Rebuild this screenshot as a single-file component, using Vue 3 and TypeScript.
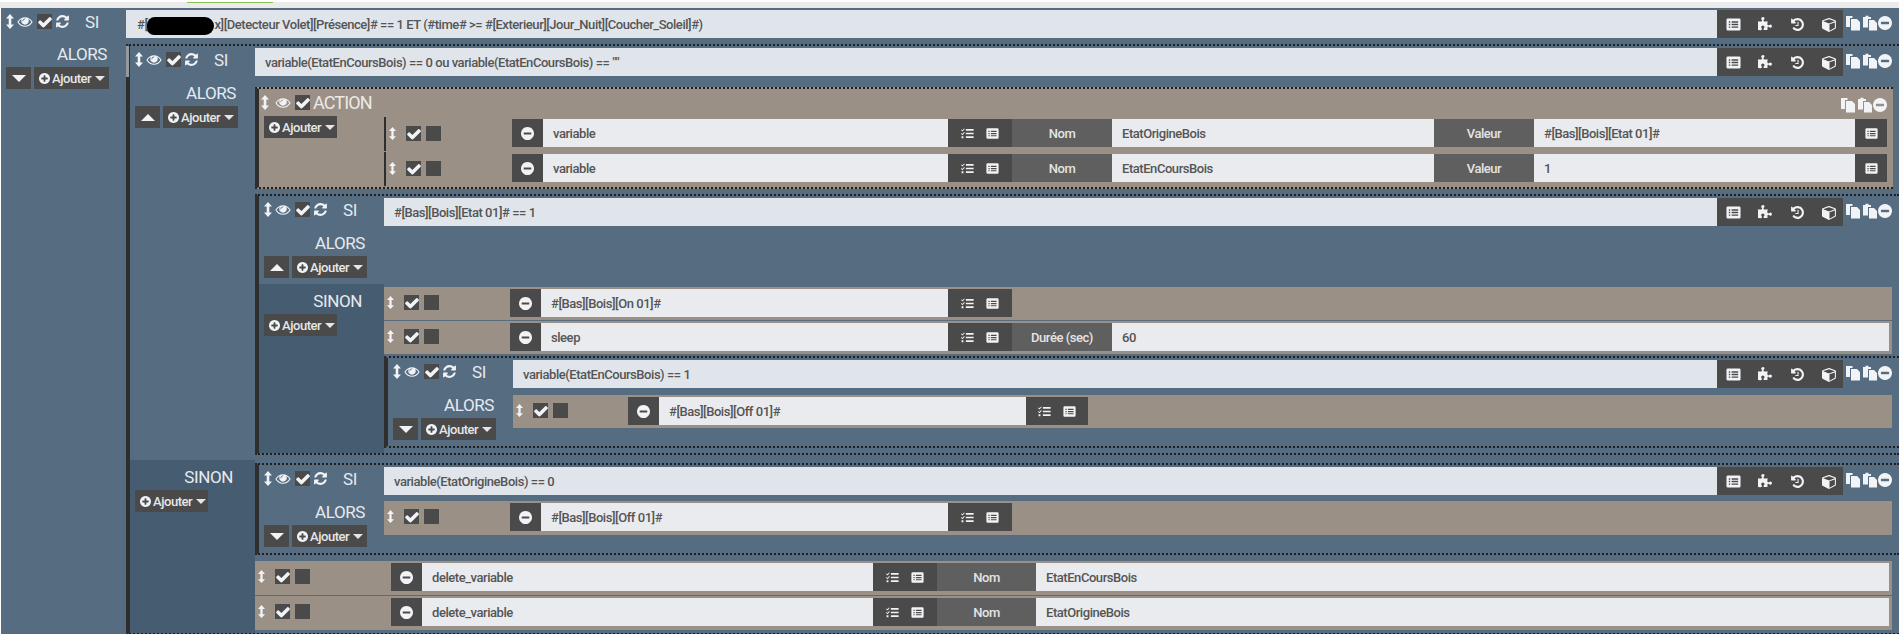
<script setup lang="ts">
interface Field { k: string; w: number; t?: string }
interface Row { grip: number; h: number; f: Field[] }

const inp = (w: number, t: string): Field => ({ k: 'in', w, t })
const lbl = (w: number, t: string): Field => ({ k: 'lbl', w, t })
const b2 = (w = 64): Field => ({ k: 'b2', w })
const b1: Field = { k: 'b1', w: 32 }

const actionRows: Row[] = [
  { grip: 126, h: 34, f: [inp(405, 'variable'), b2(), lbl(100, 'Nom'), inp(322, 'EtatOrigineBois'), lbl(100, 'Valeur'), inp(321, '#[Bas][Bois][Etat 01]#'), b1] },
  { grip: 126, h: 34, f: [inp(405, 'variable'), b2(), lbl(100, 'Nom'), inp(322, 'EtatEnCoursBois'), lbl(100, 'Valeur'), inp(321, '1'), b1] },
]
const sinonRows: Row[] = [
  { grip: 126, h: 33, f: [inp(407, '#[Bas][Bois][On 01]#'), b2()] },
  { grip: 126, h: 33, f: [inp(407, 'sleep'), b2(), lbl(100, 'Durée (sec)'), inp(777, '60')] },
]
const innerRows: Row[] = [{ grip: 115, h: 33, f: [inp(367, '#[Bas][Bois][Off 01]#'), b2(62)] }]
const lastRows: Row[] = [{ grip: 126, h: 34, f: [inp(407, '#[Bas][Bois][Off 01]#'), b2()] }]
const deleteRows: Row[] = [
  { grip: 136, h: 34, f: [inp(451, 'delete_variable'), b2(), lbl(99, 'Nom'), inp(853, 'EtatEnCoursBois')] },
  { grip: 136, h: 34, f: [inp(451, 'delete_variable'), b2(), lbl(99, 'Nom'), inp(853, 'EtatOrigineBois')] },
]
const condIcons = ['i-list', 'i-puzzle', 'i-history', 'i-cube']
const toolIcons = ['i-copy', 'i-paste', 'i-minus']
const heads = { si: 'SI' }
</script>

<template>
  <svg class="defs" aria-hidden="true">
    <symbol id="i-v" viewBox="0 0 8 15"><path fill="currentColor" d="M4 0L8 4.500H5.300V10.500H8L4 15L0 10.500H2.700V4.500H0Z"/></symbol>
    <symbol id="i-check" viewBox="0 0 1792 1792"><path fill="currentColor" d="M1671 566q0 40-28 68l-724 724-136 136q-28 28-68 28t-68-28l-136-136-362-362q-28-28-28-68t28-68l136-136q28-28 68-28t68 28l294 295 656-657q28-28 68-28t68 28l136 136q28 28 28 68z"/></symbol>
    <symbol id="i-eye" viewBox="0 0 1792 1792"><path fill="currentColor" d="M1664 960q-152-236-381-353 61 104 61 225 0 185-131.5 316.5t-316.5 131.5-316.5-131.5-131.5-316.5q0-121 61-225-229 117-381 353 133 205 333.5 326.5t434.5 121.5 434.5-121.5 333.5-326.5zm-720-384q0-20-14-34t-34-14q-125 0-214.5 89.5t-89.5 214.5q0 20 14 34t34 14 34-14 14-34q0-86 61-147t147-61q20 0 34-14t14-34zm848 384q0 34-20 69-140 230-376.5 368.5t-499.5 138.5-499.5-139-376.5-368q-20-35-20-69t20-69q140-229 376.5-368t499.5-139 499.5 139 376.5 368q20 35 20 69z"/></symbol>
    <symbol id="i-refresh" viewBox="0 0 1792 1792"><path fill="currentColor" d="M1639 1056q0 5-1 7-64 268-268 434.5t-478 166.5q-146 0-282.5-55t-243.5-157l-129 129q-19 19-45 19t-45-19-19-45v-448q0-26 19-45t45-19h448q26 0 45 19t19 45-19 45l-137 137q71 66 161 102t187 36q134 0 250-65t186-179q11-17 53-117 8-23 30-23h192q13 0 22.5 9.5t9.5 22.5zm25-800v448q0 26-19 45t-45 19h-448q-26 0-45-19t-19-45 19-45l138-138q-148-137-349-137-134 0-250 65t-186 179q-11 17-53 117-8 23-30 23h-199q-13 0-22.5-9.5t-9.5-22.5v-7q65-268 270-434.5t480-166.5q146 0 284 55.5t245 156.5l130-129q19-19 45-19t45 19 19 45z"/></symbol>
    <symbol id="i-minus" viewBox="128 128 1536 1536"><path fill="currentColor" d="M1344 960v-128q0-26-19-45t-45-19h-768q-26 0-45 19t-19 45v128q0 26 19 45t45 19h768q26 0 45-19t19-45zm320-64q0 209-103 385.5t-279.5 279.5-385.5 103-385.5-103-279.5-279.5-103-385.5 103-385.5 279.5-279.5 385.5-103 385.5 103 279.5 279.5 103 385.5z"/></symbol>
    <symbol id="i-plus" viewBox="128 128 1536 1536"><path fill="currentColor" d="M1344 960v-128q0-26-19-45t-45-19h-256v-256q0-26-19-45t-45-19h-128q-26 0-45 19t-19 45v256h-256q-26 0-45 19t-19 45v128q0 26 19 45t45 19h256v256q0 26 19 45t45 19h128q26 0 45-19t19-45v-256h256q26 0 45-19t19-45zm320-64q0 209-103 385.5t-279.5 279.5-385.5 103-385.5-103-279.5-279.5-103-385.5 103-385.5 279.5-279.5 385.5-103 385.5 103 279.5 279.5 103 385.5z"/></symbol>
    <symbol id="i-list" viewBox="0 0 16 16"><path fill="currentColor" fill-rule="evenodd" d="M2 1.500h12a1.500 1.500 0 0 1 1.500 1.500v10a1.500 1.500 0 0 1-1.500 1.500H2a1.500 1.500 0 0 1-1.500-1.500V3A1.500 1.500 0 0 1 2 1.500zM3 4.500v1.500h1.500V4.500zm3 0v1.500h7V4.500zM3 7.300v1.500h1.500V7.300zm3 0v1.500h7V7.300zM3 10v1.500h1.500V10zm3 0v1.500h7V10z"/></symbol>
    <symbol id="i-puzzle" viewBox="0 0 1792 1792"><path fill="currentColor" d="M1664 1098q0 81-44.500 135t-123.500 54q-41 0-77.500-17.500t-59-38-56.500-38-71-17.500q-110 0-110 124 0 39 16 115t15 115v5q-22 0-33 1-34 3-97.500 11.500t-115.500 13.500-98 5q-61 0-103-26.500t-42-83.500q0-37 17.500-71t38-56.500 38-59 17.500-77.500q0-79-54-123.500t-135-44.500q-84 0-143 45.500t-59 127.500q0 43 15 83t33.500 64.500 33.500 53 15 50.500q0 45-46 89-37 35-117 35-95 0-245-24-9-2-27.500-4t-27.500-4l-13-2q-1 0-3-1-2 0-2-1v-1024q2 1 17.500 3.500t34 5 21.500 3.500q150 24 245 24 80 0 117-35 46-44 46-89 0-22-15-50.500t-33.500-53-33.500-64.500-15-83q0-82 59-127.500t144-45.500q80 0 134 44.500t54 123.500q0 41-17.500 77.500t-38 59-38 56.500-17.500 71q0 57 42 83.500t103 26.500q64 0 180-15t163-17v2q-1 2-3.500 17.500t-5 34-3.500 21.500q-24 150-24 245 0 80 35 117 44 46 89 46 22 0 50.500-15t53-33.500 64.500-33.500 83-15q82 0 127.500 59t45.500 143z"/></symbol>
    <symbol id="i-history" viewBox="0 0 1792 1792"><path fill="currentColor" d="M1664 896q0 156-61 298t-164 245-245 164-298 61q-172 0-327-72.500t-264-204.500q-7-10-6.500-22.500t8.500-20.500l137-138q10-9 25-9 16 2 23 12 73 95 179 147t225 52q104 0 198.500-40.500t163.500-109.500 109.500-163.500 40.500-198.500-40.500-198.500-109.500-163.500-163.500-109.500-198.500-40.500q-98 0-188 35.500t-160 101.500l137 138q31 30 14 69-17 40-59 40h-448q-26 0-45-19t-19-45v-448q0-42 40-59 39-17 69 14l130 129q107-101 244.500-156.500t284.500-55.500q156 0 298 61t245 164 164 245 61 298zm-640-288v448q0 14-9 23t-23 9h-320q-14 0-23-9t-9-23v-64q0-14 9-23t23-9h224v-352q0-14 9-23t23-9h64q14 0 23 9t9 23z"/></symbol>
    <symbol id="i-cube" viewBox="0 0 1792 1792"><path fill="currentColor" d="M896 1629l640-349v-636l-640 233v752zm-64-865l698-254-698-254-698 254zm832-252v768q0 35-18 65t-49 47l-704 384q-28 16-61 16t-61-16l-704-384q-31-17-49-47t-18-65v-768q0-40 23-73t61-50l704-256q22-8 44-8t44 8l704 256q38 17 61 50t23 73z"/><path fill="currentColor" d="M128 560l700 254v800l-640-349z"/></symbol>
    <symbol id="i-tasks" viewBox="0 0 16 16"><path fill="currentColor" d="M6 2.500h9.500v2H6zM6 7h9.500v2H6zM6 11.500h9.500v2H6zM.8 3l1 1 2-2.200.8.700-2.800 3L0 3.700zM.8 7.500l1 1 2-2.200.8.700-2.800 3L0 8.200zM.7 11.500h2.300v2.300H.7z"/></symbol>
    <symbol id="i-copy" viewBox="0 0 16 16"><path fill="currentColor" d="M1 1h6.500v2H5v9H1zM6 4h6l3 3v8.500H6z"/></symbol>
    <symbol id="i-paste" viewBox="0 0 16 16"><path fill="currentColor" d="M1 2h2.500V.8h3V2H9v2H6v8.500H1zM7 5h5l3 3v7.500H7z"/></symbol>
  </svg>

  <div class="top"><div class="top-line"></div></div>
  <div class="root">
    <!-- outer SI -->
    <div class="if">
      <div class="cond">
        <div class="head">
          <svg class="gv"><use href="#i-v" /></svg>
          <svg class="eye"><use href="#i-eye" /></svg>
          <span class="chk"><svg><use href="#i-check" /></svg></span>
          <svg class="ref"><use href="#i-refresh" /></svg>
          <span class="si">{{ heads.si }}</span>
        </div>
        <div class="expr">#[<span class="blob"></span>x][Detecteur Volet][Présence]# == 1 ET (#time# &gt;= #[Exterieur][Jour_Nuit][Coucher_Soleil]#)</div>
        <div class="cbtn"><span v-for="c in condIcons" :key="c" class="cb"><svg><use :href="'#' + c" /></svg></span></div>
        <div class="tools"><svg v-for="t in toolIcons" :key="t"><use :href="'#' + t" /></svg></div>
      </div>
      <div class="branch">
        <div class="side first">
          <div class="word">ALORS</div>
          <div class="btnline">
            <span class="toggle"><i class="tri down"></i></span>
            <span class="add"><svg><use href="#i-plus" /></svg>Ajouter<i class="car"></i></span>
          </div>
        </div>
        <div class="body b-outer">

          <!-- block 2 -->
          <div class="if nested last">
            <i class="handle"></i>
            <div class="cond">
              <div class="head">
                <svg class="gv"><use href="#i-v" /></svg>
                <svg class="eye"><use href="#i-eye" /></svg>
                <span class="chk"><svg><use href="#i-check" /></svg></span>
                <svg class="ref"><use href="#i-refresh" /></svg>
                <span class="si">SI</span>
              </div>
              <div class="expr e2">variable(EtatEnCoursBois) == 0 ou variable(EtatEnCoursBois) == ""</div>
              <div class="cbtn"><span v-for="c in condIcons" :key="c" class="cb"><svg><use :href="'#' + c" /></svg></span></div>
              <div class="tools"><svg v-for="t in toolIcons" :key="t"><use :href="'#' + t" /></svg></div>
            </div>
            <div class="branch">
              <div class="side">
                <div class="word">ALORS</div>
                <div class="btnline">
                  <span class="toggle"><i class="tri up"></i></span>
                  <span class="add"><svg><use href="#i-plus" /></svg>Ajouter<i class="car"></i></span>
                </div>
              </div>
              <div class="body b2">

                <!-- action -->
                <div class="action">
                  <div class="a-head">
                    <svg class="gv"><use href="#i-v" /></svg>
                    <svg class="eye"><use href="#i-eye" /></svg>
                    <span class="chk"><svg><use href="#i-check" /></svg></span>
                    <span class="a-title">ACTION</span>
                    <div class="tools a-tools"><svg v-for="t in toolIcons" :key="t"><use :href="'#' + t" /></svg></div>
                  </div>
                  <div class="a-body">
                    <div class="a-left"><span class="add short"><svg><use href="#i-plus" /></svg>Ajouter<i class="car"></i></span></div>
                    <div class="a-rows">
                      <div v-for="(r, i) in actionRows" :key="i" class="act barred" :style="{ height: r.h + 'px' }">
                        <span class="grip" :style="{ width: r.grip + 'px' }"><svg class="gv2"><use href="#i-v" /></svg><span class="chk"><svg><use href="#i-check" /></svg></span><span class="sq"></span></span>
                        <span class="minus"><svg><use href="#i-minus" /></svg></span>
                        <template v-for="(f, j) in r.f" :key="j">
                          <span v-if="f.k === 'b2'" class="bs" :style="{ width: f.w + 'px' }"><svg><use href="#i-tasks" /></svg><svg><use href="#i-list" /></svg></span>
                          <span v-else-if="f.k === 'b1'" class="bs" :style="{ width: f.w + 'px' }"><svg><use href="#i-list" /></svg></span>
                          <span v-else :class="f.k" :style="{ width: f.w + 'px' }">{{ f.t }}</span>
                        </template>
                      </div>
                    </div>
                  </div>
                </div>

                <!-- block 3 -->
                <div class="if nested boxed">
                  <div class="cond">
                    <div class="head">
                      <svg class="gv"><use href="#i-v" /></svg>
                      <svg class="eye"><use href="#i-eye" /></svg>
                      <span class="chk"><svg><use href="#i-check" /></svg></span>
                      <svg class="ref"><use href="#i-refresh" /></svg>
                      <span class="si">SI</span>
                    </div>
                    <div class="expr e2">#[Bas][Bois][Etat 01]# == 1</div>
                    <div class="cbtn"><span v-for="c in condIcons" :key="c" class="cb"><svg><use :href="'#' + c" /></svg></span></div>
                    <div class="tools"><svg v-for="t in toolIcons" :key="t"><use :href="'#' + t" /></svg></div>
                  </div>
                  <div class="branch">
                    <div class="side">
                      <div class="word">ALORS</div>
                      <div class="btnline">
                        <span class="toggle"><i class="tri up"></i></span>
                        <span class="add"><svg><use href="#i-plus" /></svg>Ajouter<i class="car"></i></span>
                      </div>
                    </div>
                    <div class="body"></div>
                  </div>
                  <div class="branch">
                    <div class="side dark">
                      <div class="word sinon">SINON</div>
                      <div class="btnline"><span class="add short"><svg><use href="#i-plus" /></svg>Ajouter<i class="car"></i></span></div>
                    </div>
                    <div class="body b3s">
                      <div v-for="(r, i) in sinonRows" :key="i" class="act gap" :style="{ height: r.h + 'px' }">
                        <span class="grip" :style="{ width: r.grip + 'px' }"><svg class="gv2"><use href="#i-v" /></svg><span class="chk"><svg><use href="#i-check" /></svg></span><span class="sq"></span></span>
                        <span class="minus"><svg><use href="#i-minus" /></svg></span>
                        <template v-for="(f, j) in r.f" :key="j">
                          <span v-if="f.k === 'b2'" class="bs" :style="{ width: f.w + 'px' }"><svg><use href="#i-tasks" /></svg><svg><use href="#i-list" /></svg></span>
                          <span v-else :class="f.k" :style="{ width: f.w + 'px' }">{{ f.t }}</span>
                        </template>
                      </div>

                      <!-- block 4 -->
                      <div class="if nested boxed b4">
                        <div class="cond">
                          <div class="head">
                            <svg class="gv"><use href="#i-v" /></svg>
                            <svg class="eye"><use href="#i-eye" /></svg>
                            <span class="chk"><svg><use href="#i-check" /></svg></span>
                            <svg class="ref"><use href="#i-refresh" /></svg>
                            <span class="si">SI</span>
                          </div>
                          <div class="expr e2">variable(EtatEnCoursBois) == 1</div>
                          <div class="cbtn"><span v-for="c in condIcons" :key="c" class="cb"><svg><use :href="'#' + c" /></svg></span></div>
                          <div class="tools"><svg v-for="t in toolIcons" :key="t"><use :href="'#' + t" /></svg></div>
                        </div>
                        <div class="branch">
                          <div class="side">
                            <div class="word">ALORS</div>
                            <div class="btnline">
                              <span class="toggle"><i class="tri down"></i></span>
                              <span class="add"><svg><use href="#i-plus" /></svg>Ajouter<i class="car"></i></span>
                            </div>
                          </div>
                          <div class="body b4a">
                            <div v-for="(r, i) in innerRows" :key="i" class="act" :style="{ height: r.h + 'px' }">
                              <span class="grip" :style="{ width: r.grip + 'px' }"><svg class="gv2"><use href="#i-v" /></svg><span class="chk"><svg><use href="#i-check" /></svg></span><span class="sq"></span></span>
                              <span class="minus"><svg><use href="#i-minus" /></svg></span>
                              <template v-for="(f, j) in r.f" :key="j">
                                <span v-if="f.k === 'b2'" class="bs" :style="{ width: f.w + 'px' }"><svg><use href="#i-tasks" /></svg><svg><use href="#i-list" /></svg></span>
                                <span v-else :class="f.k" :style="{ width: f.w + 'px' }">{{ f.t }}</span>
                              </template>
                            </div>
                          </div>
                        </div>
                      </div>
                    </div>
                  </div>
                </div>
              </div>
            </div>

            <div class="branch">
              <div class="side dark">
                <div class="word sinon">SINON</div>
                <div class="btnline"><span class="add short"><svg><use href="#i-plus" /></svg>Ajouter<i class="car"></i></span></div>
              </div>
              <div class="body b2s">

                <!-- block 5 -->
                <div class="if nested boxed b5">
                  <div class="cond">
                    <div class="head">
                      <svg class="gv"><use href="#i-v" /></svg>
                      <svg class="eye"><use href="#i-eye" /></svg>
                      <span class="chk"><svg><use href="#i-check" /></svg></span>
                      <svg class="ref"><use href="#i-refresh" /></svg>
                      <span class="si">SI</span>
                    </div>
                    <div class="expr e2">variable(EtatOrigineBois) == 0</div>
                    <div class="cbtn"><span v-for="c in condIcons" :key="c" class="cb"><svg><use :href="'#' + c" /></svg></span></div>
                    <div class="tools"><svg v-for="t in toolIcons" :key="t"><use :href="'#' + t" /></svg></div>
                  </div>
                  <div class="branch">
                    <div class="side">
                      <div class="word">ALORS</div>
                      <div class="btnline">
                        <span class="toggle"><i class="tri down"></i></span>
                        <span class="add"><svg><use href="#i-plus" /></svg>Ajouter<i class="car"></i></span>
                      </div>
                    </div>
                    <div class="body b5a">
                      <div v-for="(r, i) in lastRows" :key="i" class="act" :style="{ height: r.h + 'px' }">
                        <span class="grip" :style="{ width: r.grip + 'px' }"><svg class="gv2"><use href="#i-v" /></svg><span class="chk"><svg><use href="#i-check" /></svg></span><span class="sq"></span></span>
                        <span class="minus"><svg><use href="#i-minus" /></svg></span>
                        <template v-for="(f, j) in r.f" :key="j">
                          <span v-if="f.k === 'b2'" class="bs" :style="{ width: f.w + 'px' }"><svg><use href="#i-tasks" /></svg><svg><use href="#i-list" /></svg></span>
                          <span v-else :class="f.k" :style="{ width: f.w + 'px' }">{{ f.t }}</span>
                        </template>
                      </div>
                    </div>
                  </div>
                </div>

                <div v-for="(r, i) in deleteRows" :key="i" class="act gap" :style="{ height: r.h + 'px' }">
                  <span class="grip" :style="{ width: r.grip + 'px' }"><svg class="gv2"><use href="#i-v" /></svg><span class="chk"><svg><use href="#i-check" /></svg></span><span class="sq"></span></span>
                  <span class="minus"><svg><use href="#i-minus" /></svg></span>
                  <template v-for="(f, j) in r.f" :key="j">
                    <span v-if="f.k === 'b2'" class="bs" :style="{ width: f.w + 'px' }"><svg><use href="#i-tasks" /></svg><svg><use href="#i-list" /></svg></span>
                    <span v-else :class="f.k" :style="{ width: f.w + 'px' }">{{ f.t }}</span>
                  </template>
                </div>
              </div>
            </div>
          </div>

        </div>
      </div>
    </div>
  </div>
</template>

<style>
html, body { margin: 0; padding: 0; overflow: hidden; background: #fff; }
</style>

<style scoped>
.defs { display: none; }
.top { height: 8px; box-sizing: border-box; background: #ebebeb; border-top: 2px solid #fff; }
.top-line { margin-left: 187px; width: 86px; height: 1px; background: #8cc152; }
.root {
  height: 626px; overflow: hidden; box-sizing: border-box;
  background: #566c81; border-left: 1px solid #fff;
  font-family: Roboto, "Liberation Sans", sans-serif; font-size: 13px; letter-spacing: -0.45px; font-weight: 500; color: #555;
}
svg { display: block; color: #f1f3f6; }
.if { padding-top: 2px; box-sizing: border-box; }
.nested { position: relative; border-left: 4px solid #2e2e2e; border-top: 2px dotted #1f1f1f; }
.boxed { border-bottom: 2px dotted #1f1f1f; }
.last { border-bottom: 2px dotted #1f1f1f; }
.handle { position: absolute; left: -4px; top: 0; width: 3px; height: 31px; background: #979a9d; }

.cond { display: flex; height: 28px; }
.head { width: 125px; flex: none; display: flex; align-items: flex-start; padding-top: 4px; box-sizing: border-box; }
.gv { width: 8px; height: 15px; margin-left: 5px; flex: none; }
.eye { width: 16px; height: 15px; margin-left: 3px; flex: none; }
.chk { width: 15px; height: 15px; flex: none; background: #4a4a4a; display: flex; align-items: center; justify-content: center; }
.chk svg { width: 16px; height: 16px; flex: none; }
.head .chk { margin-left: 4px; }
.ref { width: 15px; height: 15px; margin-left: 3px; flex: none; }
.si { margin-left: 15px; font-size: 17px; letter-spacing: -0.4px; font-weight: 400; line-height: 17px; color: #e6eaef; }
.expr { flex: 1; min-width: 0; background: #e0e5ec; line-height: 29px; padding-left: 11px; white-space: nowrap; overflow: hidden; }
.e2 { padding-left: 10px; }
.blob { display: inline-block; width: 67px; height: 18px; background: #000; border-radius: 8px 9px 9px 7px; vertical-align: -6px; }
.cbtn { width: 126px; flex: none; background: #4a4a4a; display: flex; align-items: center; }
.cb { width: 32px; flex: none; display: flex; justify-content: center; }
.cb svg { width: 15px; height: 15px; }
.tools { width: 56px; flex: none; display: flex; padding: 5px 0 0 2px; box-sizing: border-box; gap: 1px; }
.tools svg { width: 16px; height: 16px; flex: none; }
.tools svg:last-child { width: 14px; height: 14px; margin: 1px 0 0 -1px; }

.branch { display: flex; }
.side { width: 125px; flex: none; padding: 6px 0 6px 5px; box-sizing: border-box; }
.side.first { padding-top: 5px; }
.dark { background: #465c70; }
.word { height: 22px; line-height: 22px; font-size: 17px; letter-spacing: -0.4px; font-weight: 400; color: #e6eaef; text-align: right; padding-right: 19px; }
.word.sinon { padding-right: 22px; }
.btnline { display: flex; margin-top: 2px; gap: 3px; }
.toggle { width: 25px; height: 22px; background: #4a4a4a; display: flex; align-items: center; justify-content: center; }
.tri { width: 0; height: 0; border-left: 7px solid transparent; border-right: 7px solid transparent; }
.tri.down { border-top: 7px solid #f1f3f6; }
.tri.up { border-bottom: 7px solid #f1f3f6; }
.add { width: 75px; height: 22px; background: #4a4a4a; color: #e6e6e6; display: flex; align-items: center; padding-left: 5px; box-sizing: border-box; line-height: 23px; }
.add.short { width: 73px; }
.add svg { width: 11px; height: 11px; margin-right: 2px; flex: none; }
.car { width: 0; height: 0; margin-left: 4px; border-left: 5px solid transparent; border-right: 5px solid transparent; border-top: 5px solid #e6e6e6; }

.body { flex: 1; min-width: 0; }
.b-outer { padding-top: 6px; }
.b2 { padding: 11px 0 5px; }
.b3s { padding: 3px 0 5px; }
.b4 { margin-top: 2px; }
.b4a { padding-top: 7px; }
.b2s { padding: 3px 0 2px; }
.b5 { margin-bottom: 6px; }
.b5a { padding-top: 6px; }

.action { margin: 0 6px 5px 0; height: 102px; box-sizing: border-box; background: #9a9086; border-left: 4px solid #2e2e2e; border-top: 2px dotted #1f1f1f; border-bottom: 2px dotted #1f1f1f; }
.a-head { height: 27px; display: flex; align-items: flex-start; padding-top: 6px; box-sizing: border-box; }
.a-head .gv { margin-left: 2px; }
.a-head .eye { margin-left: 6px; }
.a-head .chk { margin-left: 4px; }
.a-title { margin-left: 3px; font-size: 18px; letter-spacing: -0.9px; line-height: 16px; font-weight: 400; color: #eceae6; }
.a-tools { margin-left: auto; padding: 2px 6px 0 0; width: auto; }
.a-body { display: flex; }
.a-left { width: 125px; flex: none; padding-left: 5px; box-sizing: border-box; }
.a-rows { flex: 1; margin-top: 1px; }

.act { display: flex; background: #9a9086; padding-top: 2px; box-sizing: border-box; }
.b3s .act, .b5a .act, .b4a .act, .b2s > .act { margin-right: 7px; }
.barred { border-left: 2px solid #2e2e2e; margin-bottom: 1px; }
.gap { margin-bottom: 1px; }
.grip { flex: none; display: flex; align-items: flex-start; padding-top: 6px; box-sizing: border-box; }
.barred .grip { padding-top: 7px; }
.gv2 { width: 7px; height: 15px; margin-left: 3px; margin-right: 10px; flex: none; }
.sq { width: 15px; height: 15px; margin-left: 5px; background: #4a4a4a; flex: none; }
.minus { width: 31px; height: 28px; flex: none; background: #4a4a4a; display: flex; align-items: center; justify-content: center; }
.minus svg { width: 13px; height: 13px; }
.in { height: 28px; flex: none; background: #e9ebef; line-height: 29px; padding-left: 10px; box-sizing: border-box; white-space: nowrap; overflow: hidden; }
.lbl { height: 28px; flex: none; background: #5f5f5f; color: #e4e4e4; line-height: 29px; text-align: center; }
.bs { height: 28px; flex: none; background: #4a4a4a; display: flex; align-items: center; justify-content: space-evenly; }
.bs svg { width: 13px; height: 13px; flex: none; }
</style>
